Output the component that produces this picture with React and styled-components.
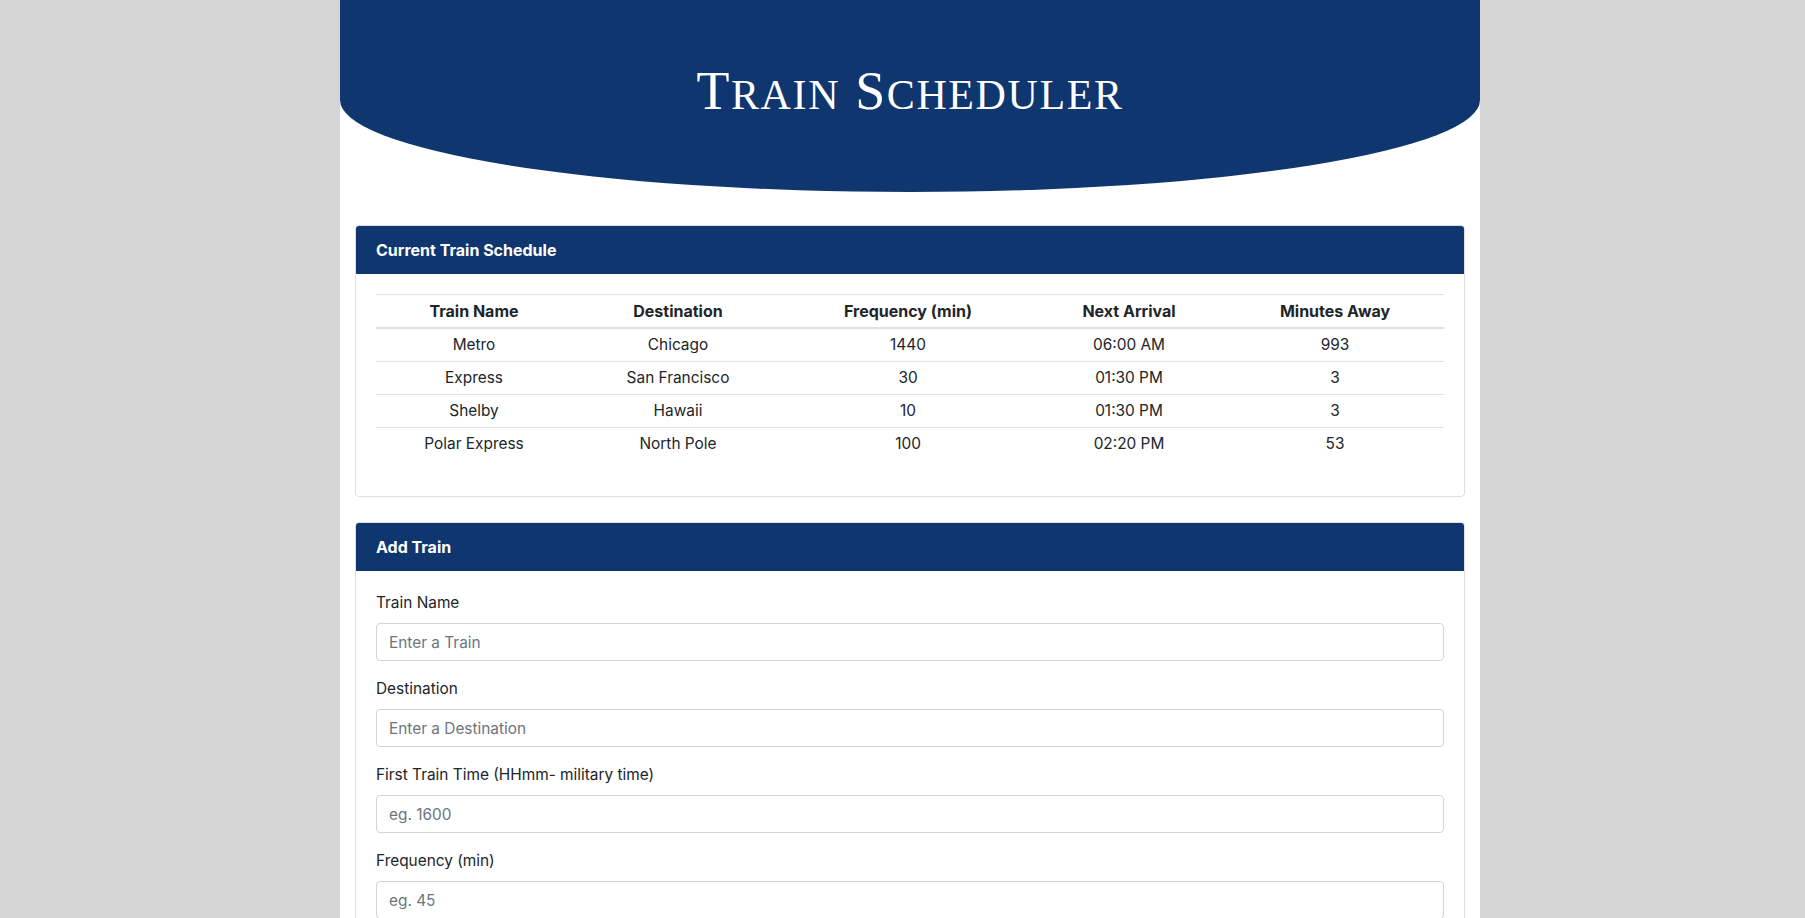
import React from 'react'
import styled, { createGlobalStyle } from 'styled-components'

const GlobalStyle = createGlobalStyle`
    body {
        margin: 0;
        padding-left: 15px;
        background-color: #d5d5d5;
        font-family: Inter, "Liberation Sans", sans-serif;
        color: #212529;
    }
    * {
        box-sizing: border-box;
    }
`;

const Page = styled.div`
    width: 1140px;
    min-height: 100vh;
    margin: 0 auto;
    background-color: #fff;
`;
const Banner = styled.header`
    height: 192px;
    padding-top: 59px;
    background-color: #10366f;
    border-bottom-left-radius: 50% 92px;
    border-bottom-right-radius: 50% 92px;
    text-align: center;
`;
const Title = styled.h1`
    margin: 0;
    color: #fff;
    font-family: "Liberation Serif", serif;
    font-weight: 400;
    font-size: 54px;
    line-height: 1.2;
    letter-spacing: 1.6px;
`;
const SmallCap = styled.span`
    font-size: 42px;
    text-transform: uppercase;
`;
const Main = styled.main`
    display: flex;
    flex-direction: column;
    gap: 25px;
    padding: 33px 15px 0;
`;
const Card = styled.section`
    border: 1px solid rgba(0, 0, 0, 0.125);
    border-radius: 4px;
    overflow: hidden;
`;
const CardHeader = styled.div`
    padding: 12px 20px;
    background-color: #10366f;
    color: #fff;
    font-weight: 700;
    font-size: 16px;
    line-height: 24px;
`;
const CardBody = styled.div`
    padding: 20px;
`;
const Table = styled.table`
    width: 100%;
    margin-bottom: 16px;
    border-collapse: collapse;
    table-layout: fixed;
    font-size: 15.4px;
`;
const Th = styled.th`
    width: ${props => props.$w}px;
    padding: 4px;
    line-height: 24px;
    text-align: center;
    font-size: 16px;
    font-weight: 700;
    border-top: 1px solid #dee2e6;
    border-bottom: 2px solid #dee2e6;
`;
const Td = styled.td`
    padding: 4px;
    line-height: 24px;
    text-align: center;
    border-top: 1px solid #dee2e6;
`;
const Row = styled.tr`
    &:first-child td {
        border-top: none;
    }
`;
const Field = styled.div`
    margin-bottom: 16px;
`;
const Label = styled.label`
    display: block;
    margin-bottom: 8px;
    font-size: 15.4px;
    line-height: 24px;
`;
const Input = styled.input`
    display: block;
    width: 100%;
    height: 38px;
    padding: 6px 12px;
    font-family: inherit;
    font-size: 15.4px;
    color: #495057;
    background-color: #fff;
    border: 1px solid #ced4da;
    border-radius: 4px;
    &::placeholder {
        color: #6c757d;
    }
`;

const columns = [
    { label: 'Train Name', w: 196 },
    { label: 'Destination', w: 212 },
    { label: 'Frequency (min)', w: 248 },
    { label: 'Next Arrival', w: 194 },
    { label: 'Minutes Away', w: 218 },
];

const trains = [
    ['Metro', 'Chicago', '1440', '06:00 AM', '993'],
    ['Express', 'San Francisco', '30', '01:30 PM', '3'],
    ['Shelby', 'Hawaii', '10', '01:30 PM', '3'],
    ['Polar Express', 'North Pole', '100', '02:20 PM', '53'],
];

const fields = [
    { label: 'Train Name', placeholder: 'Enter a Train' },
    { label: 'Destination', placeholder: 'Enter a Destination' },
    { label: 'First Train Time (HHmm- military time)', placeholder: 'eg. 1600' },
    { label: 'Frequency (min)', placeholder: 'eg. 45' },
];

function App() {
    return (
        <>
            <GlobalStyle />
            <Page>
                <Banner>
                    <Title>T<SmallCap>rain</SmallCap> S<SmallCap>cheduler</SmallCap></Title>
                </Banner>
                <Main>
                    <Card>
                        <CardHeader>Current Train Schedule</CardHeader>
                        <CardBody>
                            <Table>
                                <thead>
                                    <tr>
                                        {columns.map(c => <Th key={c.label} $w={c.w}>{c.label}</Th>)}
                                    </tr>
                                </thead>
                                <tbody>
                                    {trains.map(t => (
                                        <Row key={t[0]}>
                                            {t.map((v, i) => <Td key={i}>{v}</Td>)}
                                        </Row>
                                    ))}
                                </tbody>
                            </Table>
                        </CardBody>
                    </Card>
                    <Card>
                        <CardHeader>Add Train</CardHeader>
                        <CardBody>
                            <form onSubmit={e => e.preventDefault()}>
                                {fields.map(f => (
                                    <Field key={f.label}>
                                        <Label>{f.label}</Label>
                                        <Input type='text' placeholder={f.placeholder} />
                                    </Field>
                                ))}
                            </form>
                        </CardBody>
                    </Card>
                </Main>
            </Page>
        </>
    )
}

export default App
